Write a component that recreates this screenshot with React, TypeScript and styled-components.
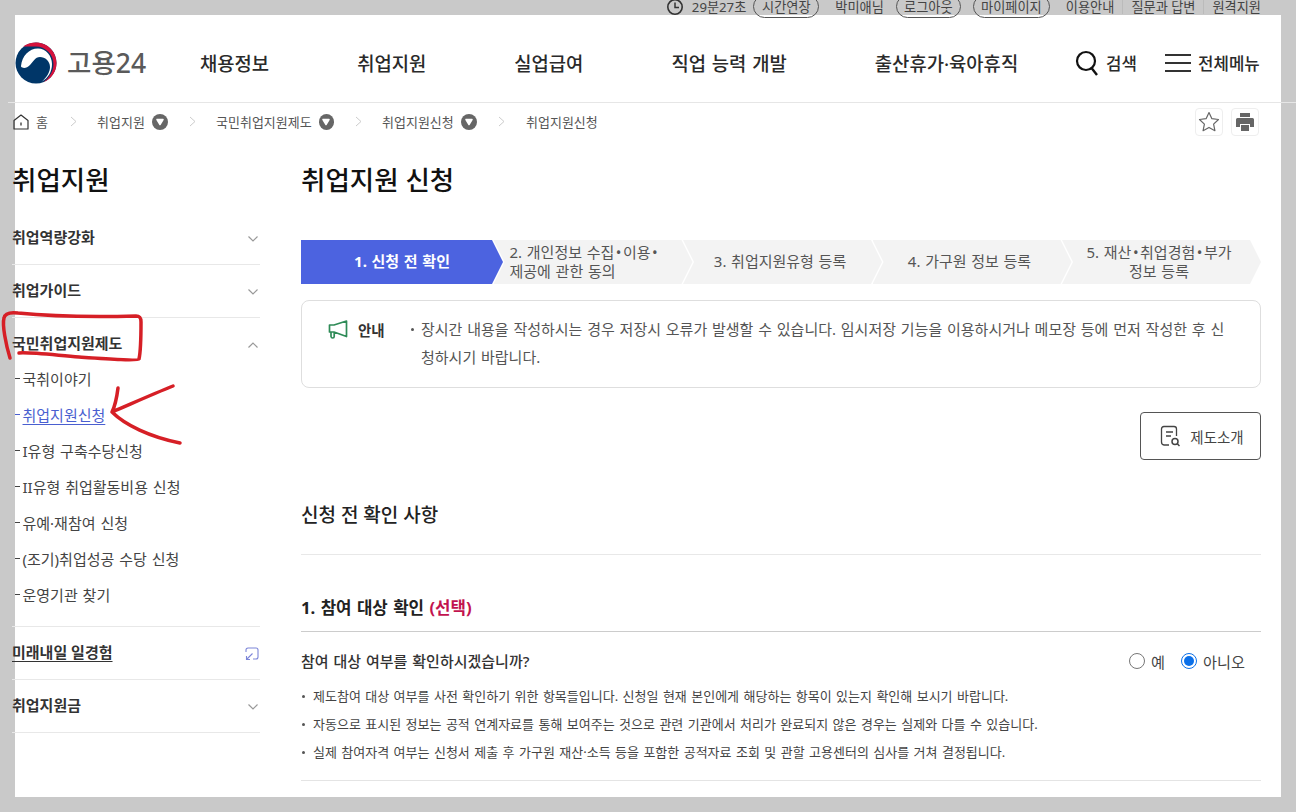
import React from "react";
import styled, { createGlobalStyle } from "styled-components";

const Global = createGlobalStyle`
  html, body { margin: 0; padding: 0; background: #c9c9c9; }
  * { box-sizing: border-box; }
  body { font-family: "Noto Sans", "Noto Sans CJK KR", sans-serif; color: #222; }
`;

const Page = styled.div`
  position: relative;
  width: 1296px;
  height: 812px;
  overflow: hidden;
  background: #c9c9c9;
`;

const UtilBar = styled.div`
  position: relative;
  z-index: 2;
  height: 13px;
  margin-bottom: 2px;
  display: flex;
  align-items: center;
  justify-content: flex-end;
  padding-right: 35px;
  font-size: 13.2px;
  color: #444;
  white-space: nowrap;
`;

const UtilText = styled.span<{ $ml?: number; $sep?: boolean }>`
  margin-left: ${(p) => p.$ml ?? 0}px;
  line-height: 14px;
  ${(p) => (p.$sep ? "border-left: 1px solid #bbb; padding-left: 8px;" : "")}
`;

const Pill = styled.span<{ $ml: number; $w: number }>`
  margin-left: ${(p) => p.$ml}px;
  width: ${(p) => p.$w}px;
  height: 23px;
  border: 1px solid #555;
  border-radius: 12px;
  display: flex;
  align-items: center;
  justify-content: center;
`;

const Sheet = styled.div`
  position: relative;
  margin-left: 15px;
  width: 1266px;
  height: 782px;
  background: #fff;
`;

const Header = styled.header`
  height: 88px;
  margin-left: -7px;
  width: 1288px;
  padding: 9px 0 0 7px;
  border-bottom: 1px solid #e6e6e6;
  display: flex;
  align-items: center;
`;

const Logo = styled.div`
  display: flex;
  align-items: center;
  width: 185px;
  gap: 9px;
`;

const LogoText = styled.span`
  font-size: 26.5px;
  font-weight: 500;
  color: #5a5a5a;
  line-height: 1;
`;

const Nav = styled.nav`
  display: flex;
  gap: 88px;
  width: 875px;
`;

const NavItem = styled.span`
  font-size: 18.8px;
  font-weight: 500;
  word-spacing: 1px;
  color: #2a2a2a;
  white-space: nowrap;
`;

const Tool = styled.span<{ $w: number; $gap: number }>`
  display: flex;
  align-items: center;
  width: ${(p) => p.$w}px;
  gap: ${(p) => p.$gap}px;
  font-size: 16.8px;
  font-weight: 500;
  color: #2a2a2a;
  white-space: nowrap;
`;

const Crumbs = styled.div`
  height: 37px;
  margin-left: -2px;
  width: 1246px;
  display: flex;
  align-items: center;
  font-size: 13px;
  color: #555;
  white-space: nowrap;
`;

const Crumb = styled.span<{ $w: number }>`
  display: flex;
  align-items: center;
  gap: 7px;
  width: ${(p) => p.$w}px;
`;

const Dot = styled.span`
  width: 16px;
  height: 16px;
  border-radius: 50%;
  background: #666;
  display: flex;
  align-items: center;
  justify-content: center;
`;

const CrumbSep = styled.span<{ $w: number }>`
  display: flex;
  width: ${(p) => p.$w}px;
  padding-left: 21px;
`;

const CrumbTools = styled.div`
  margin-left: auto;
  display: flex;
  gap: 8px;
`;

const IconBox = styled.span`
  width: 28px;
  height: 28px;
  border: 1px solid #eee;
  border-radius: 4px;
  display: flex;
  align-items: center;
  justify-content: center;
`;

const Body = styled.div`
  display: flex;
`;

const Side = styled.aside`
  width: 248px;
  margin-left: -3px;
  margin-right: 41px;
  flex: none;
`;

const SideTitle = styled.h2`
  margin: 22px 0 14px;
  font-size: 26.5px;
  line-height: 36px;
  font-weight: 500;
  color: #111;
`;

const SideRow = styled.div<{ $open?: boolean }>`
  height: 53px;
  display: flex;
  align-items: center;
  justify-content: space-between;
  padding: 0 1px 4px 0;
  font-size: 15px;
  font-weight: 700;
  color: #333;
  border-bottom: ${(p) => (p.$open ? "none" : "1px solid #e8e8e8")};
`;

const SideLink = styled.span`
  text-decoration: underline;
  text-underline-offset: 3px;
`;

const SideIcon = styled.svg`
  margin-top: 5px;
`;

const SubList = styled.ul`
  list-style: none;
  margin: -11px 0 0;
  padding: 0 0 14px;
  border-bottom: 1px solid #e8e8e8;
`;

const SubItem = styled.li<{ $active?: boolean }>`
  height: 36px;
  display: flex;
  align-items: center;
  font-size: 15px;
  word-spacing: 1px;
  color: ${(p) => (p.$active ? "#4a5fd0" : "#444")};
  white-space: nowrap;
  &::before {
    content: "";
    width: 5px;
    height: 1px;
    background: ${(p) => (p.$active ? "#4a5fd0" : "#444")};
    margin: 0 2.5px 0 3px;
  }
  a {
    color: inherit;
    text-decoration: underline;
    text-underline-offset: 3px;
  }
`;

const Main = styled.main`
  width: 960px;
  flex: none;
`;

const Title = styled.h1`
  margin: 22px 0 42px;
  font-size: 26.5px;
  line-height: 36px;
  font-weight: 500;
  color: #111;
`;

const Stepper = styled.ol`
  list-style: none;
  margin: 0;
  padding: 0;
  display: flex;
  height: 44px;
`;

const Step = styled.li<{ $active?: boolean; $left?: boolean; $pad?: number }>`
  flex: none;
  width: ${(p) => (p.$active ? 202 : 199)}px;
  margin-left: ${(p) => (p.$active ? 0 : -9.5)}px;
  height: 44px;
  display: flex;
  align-items: center;
  justify-content: ${(p) => (p.$left ? "flex-start" : "center")};
  text-align: ${(p) => (p.$left ? "left" : "center")};
  padding-left: ${(p) => p.$pad ?? 0}px;
  padding-right: ${(p) => (p.$left || p.$active ? 0 : 5)}px;
  padding-bottom: 1px;
  font-size: 15px;
  word-spacing: 0.8px;
  line-height: 19px;
  font-weight: ${(p) => (p.$active ? 700 : 400)};
  color: ${(p) => (p.$active ? "#fff" : "#555")};
  background: ${(p) => (p.$active ? "#4c63e0" : "#f3f3f3")};
  clip-path: ${(p) =>
    p.$active
      ? "polygon(0 0, calc(100% - 11px) 0, 100% 50%, calc(100% - 11px) 100%, 0 100%)"
      : "polygon(0 0, calc(100% - 11px) 0, 100% 50%, calc(100% - 11px) 100%, 0 100%, 11px 50%)"};
`;

const Mid = styled.span`
  margin: 0 1.5px;
`;

const Notice = styled.div`
  margin-top: 16px;
  height: 88px;
  border: 1px solid #dedede;
  border-radius: 8px;
  display: flex;
  padding: 14px 0 0 26px;
`;

const NoticeHead = styled.div`
  width: 83px;
  height: 28px;
  display: flex;
  align-items: center;
  gap: 10px;
  font-size: 14.5px;
  font-weight: 700;
  color: #333;
  flex: none;
`;

const NoticeText = styled.div`
  position: relative;
  padding-left: 10px;
  font-size: 15px;
  word-spacing: 0.9px;
  line-height: 28px;
  color: #555;
  white-space: nowrap;
  &::before {
    content: "";
    position: absolute;
    left: 0;
    top: 13px;
    width: 3px;
    height: 3px;
    border-radius: 50%;
    background: #555;
  }
`;

const ButtonRow = styled.div`
  display: flex;
  justify-content: flex-end;
  margin-top: 24px;
`;

const OutlineButton = styled.button`
  width: 121px;
  height: 48px;
  border: 1px solid #555;
  border-radius: 4px;
  background: #fff;
  display: flex;
  align-items: center;
  justify-content: center;
  gap: 9px;
  font: inherit;
  font-size: 14.5px;
  color: #444;
  padding: 0 0 0 3px;
`;

const SectionTitle = styled.h3`
  margin: 40px 0 0;
  height: 55px;
  font-size: 19px;
  line-height: 30px;
  font-weight: 500;
  color: #222;
  border-bottom: 1px solid #e8e8e8;
`;

const SubTitle = styled.h4`
  margin: 40px 0 0;
  height: 37px;
  font-size: 16.8px;
  word-spacing: 1px;
  line-height: 26px;
  font-weight: 700;
  color: #222;
  border-bottom: 1px solid #ccc;
  em {
    font-style: normal;
    color: #c2134f;
  }
`;

const Question = styled.div`
  height: 50px;
  display: flex;
  align-items: center;
  justify-content: space-between;
  padding-right: 16px;
  padding-top: 7px;
  font-size: 15px;
  word-spacing: 1px;
  font-weight: 500;
  color: #333;
`;

const Options = styled.div`
  display: flex;
  gap: 16px;
  font-weight: 400;
  font-size: 15.2px;
  color: #444;
`;

const Option = styled.label`
  display: flex;
  align-items: center;
  gap: 6px;
`;

const Radio = styled.span<{ $on?: boolean }>`
  width: 16px;
  height: 16px;
  border-radius: 50%;
  border: 1px solid ${(p) => (p.$on ? "#0b6fe8" : "#777")};
  display: flex;
  align-items: center;
  justify-content: center;
  &::after {
    content: "";
    width: 10px;
    height: 10px;
    border-radius: 50%;
    background: ${(p) => (p.$on ? "#0b6fe8" : "transparent")};
  }
`;

const Bullets = styled.ul`
  list-style: none;
  margin: 0;
  padding: 0 0 14px;
  border-bottom: 1px solid #e4e4e4;
`;

const Bullet = styled.li`
  position: relative;
  height: 28px;
  padding-left: 12px;
  font-size: 13px;
  word-spacing: 1.05px;
  line-height: 28px;
  color: #444;
  white-space: nowrap;
  &::before {
    content: "";
    position: absolute;
    left: 1px;
    top: 13px;
    width: 3px;
    height: 3px;
    border-radius: 50%;
    background: #555;
  }
`;

const Marks = styled.svg`
  position: absolute;
  left: 0;
  top: 0;
  z-index: 3;
  pointer-events: none;
`;

const Chevron = ({ up }: { up?: boolean }) => (
  <SideIcon width="12" height="8" viewBox="0 0 12 8" fill="none">
    <path d={up ? "M1.5 6.5 6 2l4.5 4.5" : "M1.5 1.5 6 6l4.5-4.5"} stroke="#999" strokeWidth="1.2" />
  </SideIcon>
);

const Sep = () => (
  <svg width="7" height="11" viewBox="0 0 7 11" fill="none">
    <path d="M1 1l5 4.5L1 10" stroke="#ccc" strokeWidth="1" />
  </svg>
);

const DotMark = () => (
  <Dot>
    <svg width="10" height="8" viewBox="0 0 10 8">
      <path d="M2 1.500h6L5 6.500z" fill="#fff" stroke="#fff" strokeWidth="1.500" strokeLinejoin="round" />
    </svg>
  </Dot>
);

export default function App() {
  return (
    <>
      <Global />
      <Page>
        <UtilBar>
          <svg width="18" height="18" viewBox="0 0 18 18" fill="none" style={{ marginRight: 8 }}>
            <circle cx="9" cy="9" r="7.2" stroke="#333" strokeWidth="1.6" />
            <path d="M9 4.500V9.500H13" stroke="#333" strokeWidth="1.5" />
          </svg>
          <UtilText>29분27초</UtilText>
          <Pill $ml={7} $w={66}>시간연장</Pill>
          <UtilText $ml={16}>박미애님</UtilText>
          <Pill $ml={12} $w={65}>로그아웃</Pill>
          <Pill $ml={12} $w={77}>마이페이지</Pill>
          <UtilText $ml={16}>이용안내</UtilText>
          <UtilText $ml={8} $sep>질문과 답변</UtilText>
          <UtilText $ml={8} $sep>원격지원</UtilText>
        </UtilBar>
        <Sheet>
          <Header>
            <Logo>
              <svg width="43" height="42" viewBox="0 0 43 42">
                <circle cx="21" cy="21" r="20.500" fill="#003668" />
                <path d="M8 4.500C12 1.800 16 .5 21 .5c11.500 0 20.500 9.500 20.500 20.500 0 8.500-5 16-13 19.200C34 36 38.500 29.500 38.500 22 38.500 12 30 4.500 21 4.500c-4.500 0-9 0-13 0z" fill="#d6123c" />
                <path d="M6 24C7 14 14 6.500 23 6.500c8 0 14 7.500 14 15.500 0 8-4 14-10 17.500 5-4.500 8-9.500 8-14.500 0-6-5-10-10-10-5 0-7 5-10 8-3 3-7 4-9 1.500z" fill="#fff" />
              </svg>
              <LogoText>고용24</LogoText>
            </Logo>
            <Nav>
              <NavItem>채용정보</NavItem>
              <NavItem>취업지원</NavItem>
              <NavItem>실업급여</NavItem>
              <NavItem>직업 능력 개발</NavItem>
              <NavItem>출산휴가·육아휴직</NavItem>
            </Nav>
            <Tool $w={90} $gap={7}>
              <svg width="24" height="26" viewBox="0 0 24 26" fill="none">
                <circle cx="11" cy="11" r="9" stroke="#111" strokeWidth="2.200" />
                <path d="M16.500 18 22 25" stroke="#111" strokeWidth="2.400" />
              </svg>
              검색
            </Tool>
            <Tool $w={100} $gap={7}>
              <svg width="26" height="20" viewBox="0 0 26 20" fill="none">
                <path d="M0 2h26M0 10h26M0 18h26" stroke="#333" strokeWidth="2" />
              </svg>
              전체메뉴
            </Tool>
          </Header>
          <Crumbs>
            <Crumb $w={36}>
              <svg width="16" height="16" viewBox="0 0 16 16" fill="none" style={{ flex: "none" }}>
                <path d="M1 6.500 8 1l7 5.500V15H1z" stroke="#333" strokeWidth="1.200" strokeLinejoin="round" />
                <path d="M8 8.500v3" stroke="#333" strokeWidth="1.300" />
              </svg>
              홈
            </Crumb>
            <CrumbSep $w={48}><Sep /></CrumbSep>
            <Crumb $w={71}>취업지원 <DotMark /></Crumb>
            <CrumbSep $w={48}><Sep /></CrumbSep>
            <Crumb $w={118}>국민취업지원제도 <DotMark /></Crumb>
            <CrumbSep $w={48}><Sep /></CrumbSep>
            <Crumb $w={95}>취업지원신청 <DotMark /></Crumb>
            <CrumbSep $w={49}><Sep /></CrumbSep>
            <Crumb $w={76}>취업지원신청</Crumb>
            <CrumbTools>
              <IconBox>
                <svg width="22" height="21" viewBox="0 0 22 21" fill="none">
                  <path d="M11 1.500l2.900 6.200 6.600.8-4.900 4.600 1.300 6.600L11 16.400 5.100 19.700l1.300-6.600L1.500 8.500l6.600-.8z" stroke="#666" strokeWidth="1.200" strokeLinejoin="round" />
                </svg>
              </IconBox>
              <IconBox>
                <svg width="20" height="20" viewBox="0 0 20 20">
                  <path d="M5 1h10v4H5zM2.500 6h15A1.500 1.500 0 0 1 19 7.500V15h-4v-3H5v3H1V7.500A1.500 1.500 0 0 1 2.500 6zM6 13h8v6H6z" fill="#666" />
                </svg>
              </IconBox>
            </CrumbTools>
          </Crumbs>
          <Body>
            <Side>
              <SideTitle>취업지원</SideTitle>
              <SideRow>취업역량강화 <Chevron /></SideRow>
              <SideRow>취업가이드 <Chevron /></SideRow>
              <SideRow $open>국민취업지원제도 <Chevron up /></SideRow>
              <SubList>
                <SubItem>국취이야기</SubItem>
                <SubItem $active><a>취업지원신청</a></SubItem>
                <SubItem>I유형 구축수당신청</SubItem>
                <SubItem>II유형 취업활동비용 신청</SubItem>
                <SubItem>유예·재참여 신청</SubItem>
                <SubItem>(조기)취업성공 수당 신청</SubItem>
                <SubItem>운영기관 찾기</SubItem>
              </SubList>
              <SideRow>
                <SideLink>미래내일 일경험</SideLink>
                <SideIcon width="14" height="14" viewBox="0 0 14 14" fill="none">
                  <path d="M1 5V3a2 2 0 0 1 2-2h8a2 2 0 0 1 2 2v7a2 2 0 0 1-2 2H8" stroke="#7d86d8" strokeWidth="1.100" />
                  <path d="M7.500 6.500 1.500 12.500M1.500 9v3.500H5" stroke="#7d86d8" strokeWidth="1.100" />
                </SideIcon>
              </SideRow>
              <SideRow>취업지원금 <Chevron /></SideRow>
            </Side>
            <Main>
              <Title>취업지원 신청</Title>
              <Stepper>
                <Step $active>1. 신청 전 확인</Step>
                <Step $left $pad={16}>
                  <span>2. 개인정보 수집<Mid>•</Mid>이용<Mid>•</Mid><br />제공에 관한 동의</span>
                </Step>
                <Step>3. 취업지원유형 등록</Step>
                <Step>4. 가구원 정보 등록</Step>
                <Step>
                  <span>5. 재산<Mid>•</Mid>취업경험<Mid>•</Mid>부가<br />정보 등록</span>
                </Step>
              </Stepper>
              <Notice>
                <NoticeHead>
                  <svg width="20" height="19" viewBox="0 0 20 19" fill="none">
                    <path d="M18.500 1 6 5H1.500v7H6l12.500 4.500zM3 12l0 4.500q.2 1.500 1.700 1.500 1.500 0 1.500-1.500V12.500" stroke="#2e8b57" strokeWidth="1.700" strokeLinejoin="round" />
                  </svg>
                  안내
                </NoticeHead>
                <NoticeText>
                  장시간 내용을 작성하시는 경우 저장시 오류가 발생할 수 있습니다. 임시저장 기능을 이용하시거나 메모장 등에 먼저 작성한 후 신<br />
                  청하시기 바랍니다.
                </NoticeText>
              </Notice>
              <ButtonRow>
                <OutlineButton>
                  <svg width="21" height="22" viewBox="0 0 21 22" fill="none">
                    <path d="M9 20H4q-2.500-.2-2.500-3V4Q1.500 1.500 4 1.500h10Q16.500 1.500 16.500 4v7" stroke="#444" strokeWidth="1.300" />
                    <path d="M6 7h7M6 11h5" stroke="#444" strokeWidth="1.300" />
                    <circle cx="15" cy="16.500" r="3" stroke="#444" strokeWidth="1.500" />
                    <path d="M17.300 18.800 19.500 21" stroke="#444" strokeWidth="1.500" />
                  </svg>
                  제도소개
                </OutlineButton>
              </ButtonRow>
              <SectionTitle>신청 전 확인 사항</SectionTitle>
              <SubTitle>1. 참여 대상 확인 <em>(선택)</em></SubTitle>
              <Question>
                참여 대상 여부를 확인하시겠습니까?
                <Options>
                  <Option><Radio />예</Option>
                  <Option><Radio $on />아니오</Option>
                </Options>
              </Question>
              <Bullets>
                <Bullet>제도참여 대상 여부를 사전 확인하기 위한 항목들입니다. 신청일 현재 본인에게 해당하는 항목이 있는지 확인해 보시기 바랍니다.</Bullet>
                <Bullet>자동으로 표시된 정보는 공적 연계자료를 통해 보여주는 것으로 관련 기관에서 처리가 완료되지 않은 경우는 실제와 다를 수 있습니다.</Bullet>
                <Bullet>실제 참여자격 여부는 신청서 제출 후 가구원 재산·소득 등을 포함한 공적자료 조회 및 관할 고용센터의 심사를 거쳐 결정됩니다.</Bullet>
              </Bullets>
            </Main>
          </Body>
        </Sheet>
        <Marks width="1296" height="812" viewBox="0 0 1296 812" fill="none">
          <path d="M10 358C6 345 2 325 4 318c1-5 6-6 14-5 30 3 80 4 118 3 4 0 5 2 5 6 0 12 0 28-2 37-1 2-30 0-60-2-25-2-50-5-60-4" stroke="#d61f26" strokeWidth="3.500" strokeLinecap="round" strokeLinejoin="round" />
          <path d="M173 386c-20 8-40 17-61 26M118 388c-1 8-2 16-6 24C125 425 150 437 180 443" stroke="#d61f26" strokeWidth="3.500" strokeLinecap="round" strokeLinejoin="round" />
        </Marks>
      </Page>
    </>
  );
}
